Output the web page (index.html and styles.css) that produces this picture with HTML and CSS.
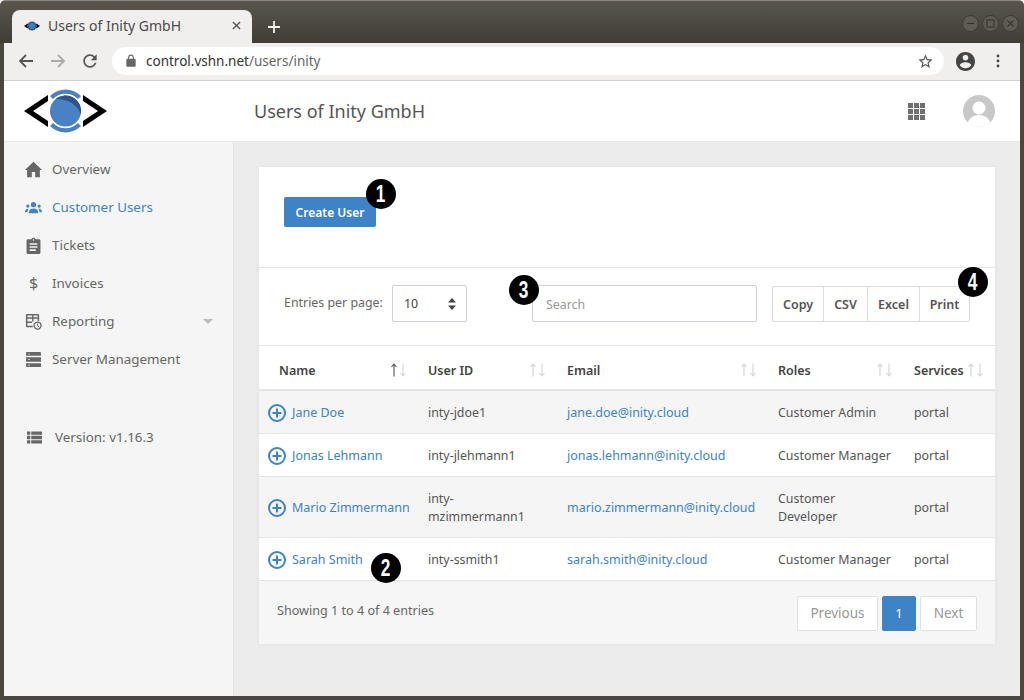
FILE: index.html
```html
<!DOCTYPE html>
<html lang="en">
<head>
  <meta charset="UTF-8">
  <title>Users of Inity GmbH</title>
  <link rel="stylesheet" href="styles.css">
</head>
<body>
  <div class="window">
    <!-- browser chrome -->
    <div class="tabbar">
      <div class="tab">
        <svg class="favicon" viewBox="0 0 16 10"><path d="M0 5 3.500 2.500 5 4 3 5 5 6 3.500 7.500zM16 5 12.500 2.500 11 4 13 5 11 6 12.500 7.500z" fill="#111"/><circle cx="8" cy="5" r="4.500" fill="#2b5a94"/><circle cx="8" cy="5" r="3" fill="#3f7cc4"/></svg>
        <span class="tab-title">Users of Inity GmbH</span>
        <svg class="tab-close" viewBox="0 0 10 10"><path d="M1 1 9 9M9 1 1 9" stroke="#555" stroke-width="1.500"/></svg>
      </div>
      <svg class="tab-new" viewBox="0 0 12 12"><path d="M6 0V12M0 6H12" stroke="#f1f0ee" stroke-width="1.800"/></svg>
      <div class="win-controls">
        <span class="win-btn"><svg viewBox="0 0 10 10"><path d="M1 5H9" stroke="#34322c" stroke-width="1.200"/></svg></span>
        <span class="win-btn"><svg viewBox="0 0 10 10"><rect x="1" y="1" width="8" height="8" fill="none" stroke="#34322c" stroke-width="1.200"/></svg></span>
        <span class="win-btn"><svg viewBox="0 0 10 10"><path d="M1.500 1.500 8.500 8.500M8.500 1.500 1.500 8.500" stroke="#34322c" stroke-width="1.200"/></svg></span>
      </div>
    </div>
    <div class="toolbar">
      <svg class="tool-icon" viewBox="0 0 16 16"><path d="M15 8H2M8 2 2 8l6 6" fill="none" stroke="#555" stroke-width="1.800"/></svg>
      <svg class="tool-icon" viewBox="0 0 16 16"><path d="M1 8H14M8 2l6 6-6 6" fill="none" stroke="#aaa" stroke-width="1.800"/></svg>
      <svg class="tool-icon reload" viewBox="0 0 24 24"><path fill="#555" d="M17.650 6.350C16.200 4.900 14.210 4 12 4c-4.420 0-7.990 3.580-7.990 8s3.570 8 7.990 8c3.730 0 6.840-2.550 7.730-6h-2.080c-.82 2.330-3.040 4-5.650 4-3.310 0-6-2.690-6-6s2.690-6 6-6c1.660 0 3.140.69 4.220 1.780L13 11h7V4l-2.350 2.350z"/></svg>
      <div class="address">
        <svg class="lock" viewBox="0 0 24 24"><path fill="#666" d="M18 8h-1V6c0-2.760-2.240-5-5-5S7 3.240 7 6v2H6c-1.100 0-2 .9-2 2v10c0 1.100.9 2 2 2h12c1.100 0 2-.9 2-2V10c0-1.100-.9-2-2-2zm-2.900 0H8.900V6c0-1.710 1.390-3.100 3.100-3.100 1.710 0 3.100 1.390 3.100 3.100v2z"/></svg>
        <span class="url"><span class="url-host">control.vshn.net</span>/users/inity</span>
        <svg class="star" viewBox="0 0 24 24"><path fill="#555" d="M22 9.240l-7.190-.62L12 2 9.190 8.630 2 9.240l5.460 4.730L5.820 21 12 17.270 18.180 21l-1.630-7.030L22 9.240zM12 15.400l-3.760 2.270 1-4.280-3.320-2.880 4.380-.38L12 6.100l1.710 4.040 4.380.38-3.320 2.880 1 4.280L12 15.400z"/></svg>
      </div>
      <svg class="account" viewBox="2 2 20 20"><path fill="#444" d="M12 2C6.480 2 2 6.480 2 12s4.480 10 10 10 10-4.480 10-10S17.520 2 12 2zm0 3c1.660 0 3 1.340 3 3s-1.340 3-3 3-3-1.340-3-3 1.340-3 3-3zm0 14.200c-2.500 0-4.710-1.280-6-3.220.03-1.990 4-3.080 6-3.080 1.990 0 5.970 1.090 6 3.080-1.290 1.940-3.500 3.220-6 3.220z"/></svg>
      <svg class="menu-dots" viewBox="0 0 4 14"><circle cx="2" cy="2" r="1.400" fill="#444"/><circle cx="2" cy="7" r="1.400" fill="#444"/><circle cx="2" cy="12" r="1.400" fill="#444"/></svg>
    </div>

    <!-- page header -->
    <header class="header">
      <div class="logo-wrap">
        <svg class="logo" viewBox="0 0 84 46">
          <path d="M24 7 0 23 24 39V33L9 23 24 13z" fill="#000"/>
          <path d="M59 7 83 23 59 39V33L74 23 59 13z" fill="#000"/>
          <path d="M26 8A22 22 0 0 1 57 8L54 11A17.500 17.500 0 0 0 29 11z" fill="#4a80c4"/>
          <path d="M26 38A22 22 0 0 0 57 38L54 35A17.500 17.500 0 0 1 29 35z" fill="#4a80c4"/>
          <circle cx="41.500" cy="23" r="15.500" fill="#4a80c4"/>
          <path d="M32 10.800A15.500 15.500 0 0 1 56.700 26.500Q52 12 32 10.800z" fill="#2f5487"/>
        </svg>
      </div>
      <h1 class="page-title">Users of Inity GmbH</h1>
      <svg class="apps" viewBox="0 0 17 17"><g fill="#707070"><rect width="5" height="5"/><rect x="6" width="5" height="5"/><rect x="12" width="5" height="5"/><rect y="6" width="5" height="5"/><rect x="6" y="6" width="5" height="5"/><rect x="12" y="6" width="5" height="5"/><rect y="12" width="5" height="5"/><rect x="6" y="12" width="5" height="5"/><rect x="12" y="12" width="5" height="5"/></g></svg>
      <svg class="avatar" viewBox="0 0 32 32"><defs><clipPath id="avatar-clip"><circle cx="16" cy="16" r="16"/></clipPath></defs><g clip-path="url(#avatar-clip)"><rect width="32" height="32" fill="#c8c8c8"/><circle cx="16" cy="13" r="6.500" fill="#fff"/><path d="M4 32c0-8 6-12 12-12s12 4 12 12z" fill="#fff"/></g></svg>
    </header>

    <div class="body-row">
      <!-- sidebar -->
      <nav class="sidebar">
        <a class="nav-item">
          <svg class="nav-icon" viewBox="2 2 20 20"><path d="M10 21v-6h4v6h5.500v-8.500H22L12 3 2 12.500h2.500V21z"/></svg>
          <span>Overview</span>
        </a>
        <a class="nav-item active">
          <svg class="nav-icon" viewBox="0 0 18 14"><circle cx="9" cy="4" r="2.800"/><path d="M4 13c0-3.500 2-5 5-5s5 1.500 5 5z"/><circle cx="3" cy="5.500" r="1.700"/><circle cx="15" cy="5.500" r="1.700"/><path d="M0 12c0-2.500 1-3.800 3-3.800l.8.200C3 9.500 2.600 10.800 2.600 12zM18 12c0-2.500-1-3.800-3-3.800l-.8.200c.8 1.100 1.200 2.400 1.200 3.600z"/></svg>
          <span>Customer Users</span>
        </a>
        <a class="nav-item">
          <svg class="nav-icon" viewBox="3 0 18 22"><path d="M19 3h-4.180C14.400 1.840 13.300 1 12 1c-1.300 0-2.400.84-2.820 2H5c-1.100 0-2 .9-2 2v15c0 1.100.9 2 2 2h14c1.100 0 2-.9 2-2V5c0-1.100-.9-2-2-2zm-7 0c.55 0 1 .45 1 1s-.45 1-1 1-1-.45-1-1 .45-1 1-1zm3 15H7v-2h8v2zm2-4H7v-2h10v2zm0-4H7V8h10v2z"/></svg>
          <span>Tickets</span>
        </a>
        <a class="nav-item">
          <span class="nav-icon nav-glyph">$</span>
          <span>Invoices</span>
        </a>
        <a class="nav-item has-caret">
          <svg class="nav-icon" viewBox="0 0 18 18"><path d="M2 1h12c.6 0 1 .4 1 1v6.600h-1.600V6H9v3H7.500V6H2.600v3h4.900v1.500H2.600v3h5.600V15H2c-.6 0-1-.4-1-1V2c0-.6.4-1 1-1zM9 2.600V4.500h4.400V2.600zm-6.400 0V4.500h4.900V2.600z"/><circle cx="13.300" cy="13.300" r="3.700" fill="none" stroke="#666" stroke-width="1.400"/><path d="M13.300 11v2.500l1.600 1" fill="none" stroke="#666" stroke-width="1"/></svg>
          <span>Reporting</span>
          <span class="caret"></span>
        </a>
        <a class="nav-item">
          <svg class="nav-icon" viewBox="0 0 16 18"><path fill-rule="evenodd" d="M1 1h14c.5 0 .9.4.9.900V5H.1V1.900C.1 1.400.5 1 1 1zm1.500 1.800v1h1.500v-1zM.1 6.500h15.800v5H.1zm2.400 2v1H4v-1zM.1 13h15.800v3.100c0 .5-.4.900-.9.900H1c-.5 0-.9-.4-.9-.9zm2.400 1.500v1H4v-1z"/></svg>
          <span>Server Management</span>
        </a>
        <div class="nav-item version">
          <svg class="nav-icon" viewBox="0 0 16 13"><path d="M0 0h3.500v3.500H0zM4.500 0H16v3.500H4.500zM0 4.700h3.500v3.600H0zM4.500 4.700H16v3.600H4.500zM0 9.500h3.500V13H0zM4.500 9.500H16V13H4.500z"/></svg>
          <span>Version: v1.16.3</span>
        </div>
      </nav>

      <!-- main content -->
      <main class="content">
        <section class="card">
          <div class="card-top">
            <button class="btn-create">Create User</button>
          </div>
          <div class="controls">
            <label class="entries-label">Entries per page:</label>
            <div class="select">
              <span>10</span>
              <svg class="select-arrows" viewBox="0 0 8 12"><path d="M4 0 8 4.500H0zM4 12 0 7.500H8z" fill="#444"/></svg>
            </div>
            <div class="search">Search</div>
            <div class="btn-group">
              <span class="btn-export export-copy">Copy</span>
              <span class="btn-export export-csv">CSV</span>
              <span class="btn-export export-excel">Excel</span>
              <span class="btn-export export-print">Print</span>
            </div>
          </div>
          <table class="users">
            <colgroup>
              <col class="col-name"><col class="col-id"><col class="col-email"><col class="col-roles"><col class="col-services">
            </colgroup>
            <thead>
              <tr>
                <th class="first"><div class="th-inner">Name<svg class="sort sorted" viewBox="0 0 17 14"><path class="up" d="M4 13.500V1M1.500 4 4 1 6.500 4"/><path class="down" d="M13 .5V13M10.500 10 13 13 15.500 10"/></svg></div></th>
                <th><div class="th-inner">User ID<svg class="sort" viewBox="0 0 17 14"><path class="up" d="M4 13.500V1M1.500 4 4 1 6.500 4"/><path class="down" d="M13 .5V13M10.500 10 13 13 15.500 10"/></svg></div></th>
                <th><div class="th-inner">Email<svg class="sort" viewBox="0 0 17 14"><path class="up" d="M4 13.500V1M1.500 4 4 1 6.500 4"/><path class="down" d="M13 .5V13M10.500 10 13 13 15.500 10"/></svg></div></th>
                <th><div class="th-inner">Roles<svg class="sort" viewBox="0 0 17 14"><path class="up" d="M4 13.500V1M1.500 4 4 1 6.500 4"/><path class="down" d="M13 .5V13M10.500 10 13 13 15.500 10"/></svg></div></th>
                <th><div class="th-inner">Services<svg class="sort" viewBox="0 0 17 14"><path class="up" d="M4 13.500V1M1.500 4 4 1 6.500 4"/><path class="down" d="M13 .5V13M10.500 10 13 13 15.500 10"/></svg></div></th>
              </tr>
            </thead>
            <tbody>
              <tr class="odd">
                <td class="name"><div class="name-cell"><svg class="expand" viewBox="0 0 18 18"><circle cx="9" cy="9" r="8" fill="none" stroke="#3d83c5" stroke-width="2"/><path d="M9 4.500v9M4.500 9h9" stroke="#3d83c5" stroke-width="2"/></svg><a>Jane Doe</a></div></td>
                <td>inty-jdoe1</td>
                <td><a>jane.doe@inity.cloud</a></td>
                <td>Customer Admin</td>
                <td>portal</td>
              </tr>
              <tr>
                <td class="name"><div class="name-cell"><svg class="expand" viewBox="0 0 18 18"><circle cx="9" cy="9" r="8" fill="none" stroke="#3d83c5" stroke-width="2"/><path d="M9 4.500v9M4.500 9h9" stroke="#3d83c5" stroke-width="2"/></svg><a>Jonas Lehmann</a></div></td>
                <td>inty-jlehmann1</td>
                <td><a>jonas.lehmann@inity.cloud</a></td>
                <td>Customer Manager</td>
                <td>portal</td>
              </tr>
              <tr class="odd">
                <td class="name"><div class="name-cell"><svg class="expand" viewBox="0 0 18 18"><circle cx="9" cy="9" r="8" fill="none" stroke="#3d83c5" stroke-width="2"/><path d="M9 4.500v9M4.500 9h9" stroke="#3d83c5" stroke-width="2"/></svg><a>Mario Zimmermann</a></div></td>
                <td>inty-<br>mzimmermann1</td>
                <td><a>mario.zimmermann@inity.cloud</a></td>
                <td>Customer<br>Developer</td>
                <td>portal</td>
              </tr>
              <tr>
                <td class="name"><div class="name-cell"><svg class="expand" viewBox="0 0 18 18"><circle cx="9" cy="9" r="8" fill="none" stroke="#3d83c5" stroke-width="2"/><path d="M9 4.500v9M4.500 9h9" stroke="#3d83c5" stroke-width="2"/></svg><a>Sarah Smith</a></div></td>
                <td>inty-ssmith1</td>
                <td><a>sarah.smith@inity.cloud</a></td>
                <td>Customer Manager</td>
                <td>portal</td>
              </tr>
            </tbody>
          </table>
          <div class="card-footer">
            <span class="showing">Showing 1 to 4 of 4 entries</span>
            <div class="pagination">
              <span class="page-btn page-prev">Previous</span>
              <span class="page-btn current">1</span>
              <span class="page-btn page-next">Next</span>
            </div>
          </div>
        </section>
      </main>
    </div>

    <!-- numbered callouts on top of the screenshot -->
    <span class="callout callout-1"><b>1</b></span>
    <span class="callout callout-2"><b>2</b></span>
    <span class="callout callout-3"><b>3</b></span>
    <span class="callout callout-4"><b>4</b></span>
  </div>
</body>
</html>
```

FILE: styles.css
```css
* {
  box-sizing: border-box;
}

html, body {
  margin: 0;
  padding: 0;
  height: 700px;
  overflow: hidden;
  background: #fff;
}

body {
  font-family: "Noto Sans", "Open Sans", sans-serif;
  font-size: 12.400px;
  color: #555;
}

.window {
  position: relative;
  width: 1024px;
  height: 700px;
  display: flex;
  flex-direction: column;
  padding: 0 4px 4px;
  background: #4a4740;
  border-top-left-radius: 6px;
  border-top-right-radius: 6px;
  overflow: hidden;
}

/* browser chrome */
.tabbar {
  flex: none;
  height: 43px;
  margin: 0 -4px;
  padding: 9px 12px 0;
  display: flex;
  align-items: flex-start;
  background: linear-gradient(#5a564d, #403d36);
  border-top: 1px solid #8a877f;
  position: relative;
}

.tab {
  width: 240px;
  height: 33px;
  display: flex;
  align-items: center;
  padding: 0 11px 2px 12px;
  background: #f0efee;
  border-radius: 8px 8px 0 0;
  color: #4a4a4a;
  font-size: 14px;
}

.favicon {
  width: 16px;
  height: 10px;
  margin-right: 8px;
}

.tab-title {
  flex: 1;
}

.tab-close {
  width: 9px;
  height: 9px;
}

.tab-new {
  width: 12px;
  height: 12px;
  margin: 11px 0 0 16px;
}

.win-controls {
  margin-left: auto;
  margin-top: 5px;
  margin-right: -7px;
  display: flex;
  gap: 3px;
}

.win-btn {
  width: 17px;
  height: 17px;
  display: flex;
  align-items: center;
  justify-content: center;
  border-radius: 50%;
  background: #5f5c54;
  border: 1px solid #3b3932;
}

.win-btn svg {
  width: 9px;
  height: 9px;
}

.toolbar {
  flex: none;
  height: 38px;
  margin-left: 0;
  display: flex;
  align-items: center;
  padding: 0 0 1px 14px;
  background: #f0efee;
  border-bottom: 1px solid #cfcfcf;
}

.tool-icon {
  width: 16px;
  height: 16px;
  margin-right: 16px;
}

.reload {
  width: 20px;
  height: 20px;
  margin-left: -2px;
  margin-right: 12px;
}

.address {
  width: 832px;
  height: 28px;
  display: flex;
  align-items: center;
  padding: 0 10px 0 12px;
  background: #fff;
  border-radius: 14px;
}

.lock {
  width: 14px;
  height: 14px;
  margin-right: 8px;
}

.url {
  flex: 1;
  font-size: 13.500px;
  color: #666;
}

.url-host {
  color: #333;
}

.star {
  width: 17px;
  height: 17px;
}

.account {
  width: 19px;
  height: 19px;
  margin-left: 12px;
}

.menu-dots {
  width: 4px;
  height: 14px;
  margin-left: 21px;
}

/* page header */
.header {
  flex: none;
  height: 61px;
  display: flex;
  align-items: center;
  background: #fff;
  border-bottom: 1px solid #e7e7e7;
}

.logo-wrap {
  width: 250px;
  padding-left: 20px;
  display: flex;
}

.logo {
  width: 84px;
  height: 46px;
}

.page-title {
  flex: 1;
  margin: 0;
  font-size: 18px;
  font-weight: 400;
  color: #555;
}

.apps {
  width: 17px;
  height: 17px;
  margin-right: 38px;
}

.avatar {
  width: 32px;
  height: 32px;
  margin-right: 25px;
}

.body-row {
  flex: 1;
  display: flex;
  min-height: 0;
}

/* sidebar */
.sidebar {
  flex: none;
  width: 230px;
  padding-top: 8px;
  background: #f5f5f5;
  border-right: 1px solid #e5e5e5;
}

.nav-item {
  height: 38px;
  display: flex;
  align-items: center;
  padding-left: 21px;
  color: #666;
  font-size: 13.400px;
}

.nav-item.active {
  color: #3d83c5;
}

.nav-icon {
  width: 17px;
  height: 17px;
  margin-right: 10px;
  fill: #666;
  flex: none;
}

.active .nav-icon {
  fill: #3d83c5;
}

.nav-glyph {
  font-size: 16px;
  text-align: center;
  line-height: 17px;
}

.caret {
  margin-left: auto;
  margin-right: 20px;
  width: 0;
  height: 0;
  border-left: 5px solid transparent;
  border-right: 5px solid transparent;
  border-top: 5px solid #bbb;
}

.version {
  margin-top: 40px;
}

.version .nav-icon {
  width: 15px;
  height: 13px;
  margin-left: 2px;
  margin-right: 13px;
}

/* main content */
.content {
  flex: 1;
  min-width: 0;
  padding: 25px 25px 0;
  background: #ececec;
}

.card {
  width: 736px;
  background: #fff;
  box-shadow: 0 0 6px rgba(0, 0, 0, 0.05);
}

.card-top {
  height: 101px;
  padding: 30px 25px 0;
  border-bottom: 1px solid #e5e5e5;
}

.btn-create {
  display: block;
  width: 92px;
  height: 30px;
  padding: 0;
  border: none;
  border-radius: 2px;
  background: #3d83c5;
  color: #fff;
  font: 600 12px "Noto Sans", sans-serif;
}

.controls {
  height: 78px;
  display: flex;
  align-items: center;
  padding: 0 0 6px 25px;
  border-bottom: 1px solid #e5e5e5;
}

.entries-label {
  width: 108px;
  margin-bottom: 2px;
  color: #666;
}

.select {
  width: 75px;
  height: 37px;
  display: flex;
  align-items: center;
  justify-content: space-between;
  padding: 0 10px 0 11px;
  border: 1px solid #ccd0d8;
  border-radius: 2px;
  color: #444;
}

.select-arrows {
  width: 8px;
  height: 12px;
}

.search {
  width: 225px;
  height: 37px;
  margin-left: 65px;
  padding: 1px 13px 0;
  display: flex;
  align-items: center;
  border: 1px solid #ccd0d8;
  border-radius: 2px;
  color: #999;
}

.btn-group {
  height: 36px;
  margin-left: 15px;
  margin-top: 1px;
  display: flex;
  border: 1px solid #dcdcdc;
  border-radius: 2px;
}

.btn-export {
  display: flex;
  align-items: center;
  justify-content: center;
  border-right: 1px solid #dcdcdc;
  font-weight: 600;
  font-size: 12.500px;
  color: #555;
}

.export-copy { width: 51px; }
.export-csv { width: 44px; }
.export-excel { width: 52px; }
.export-print { width: 49px; border-right: none; }

/* table */
.users {
  width: 736px;
  table-layout: fixed;
  border-collapse: collapse;
}

.col-name { width: 159px; }
.col-id { width: 139px; }
.col-email { width: 211px; }
.col-roles { width: 136px; }
.col-services { width: 91px; }

.users th {
  height: 44px;
  padding: 5px 11px 0 10px;
  text-align: left;
  font-size: 12.500px;
  font-weight: 600;
  color: #444;
  border-bottom: 2px solid #e3e5e9;
}

.users th.first {
  padding-left: 20px;
}

.th-inner {
  display: flex;
  align-items: center;
  justify-content: space-between;
}

.sort {
  width: 17px;
  height: 14px;
  flex: none;
  fill: none;
  stroke: #d4d4d4;
  stroke-width: 1.100;
}

.sort.sorted .up {
  stroke: #555;
}

.users td {
  padding: 13px 10px 11px;
  line-height: 18px;
  color: #555;
  border-bottom: 1px solid #e3e5e9;
}

.users tr.odd td {
  background: #f5f5f5;
}

.users td.name {
  padding-left: 9px;
  padding-right: 0;
}

.name-cell {
  display: flex;
  align-items: center;
}

.expand {
  width: 18px;
  height: 18px;
  margin-right: 6px;
  flex: none;
}

.users a {
  color: #3d83c5;
  font-size: 12.500px;
}

.card-footer {
  height: 63px;
  display: flex;
  align-items: flex-start;
  justify-content: space-between;
  padding: 15px 18px 0;
  background: #f6f6f6;
}

.showing {
  margin-top: 6px;
  font-size: 12.600px;
  color: #666;
}

.pagination {
  display: flex;
  gap: 4px;
}

.page-btn {
  height: 35px;
  padding-bottom: 2px;
  display: flex;
  align-items: center;
  justify-content: center;
  background: #fff;
  border: 1px solid #e0e0e0;
  border-radius: 2px;
  color: #999;
  font-size: 13.500px;
}

.page-prev { width: 81px; }
.page-next { width: 57px; }

.page-btn.current {
  width: 34px;
  background: #3d83c5;
  border-color: #3d83c5;
  color: #fff;
  font-size: 13px;
}

/* numbered callouts */
.callout {
  position: absolute;
  width: 30px;
  height: 30px;
  display: flex;
  align-items: center;
  justify-content: center;
  border-radius: 50%;
  background: #000;
  color: #fff;
  font-family: "Liberation Sans", sans-serif;
  font-size: 24px;
}

.callout b {
  display: block;
  transform: scaleX(0.72);
}

.callout-1 { left: 366px; top: 179px; }
.callout-2 { left: 371px; top: 553px; }
.callout-3 { left: 509px; top: 275px; }
.callout-4 { left: 958px; top: 267px; }
```
